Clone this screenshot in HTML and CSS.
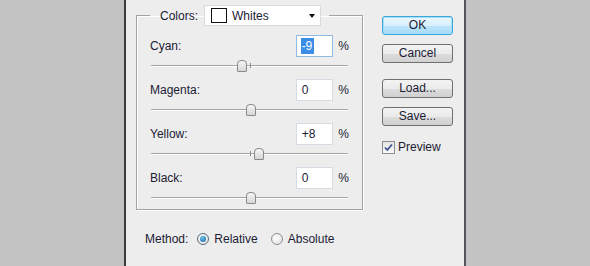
FILE: index.html
```html
<!DOCTYPE html>
<html lang="en">
<head>
    <meta charset="UTF-8">
    <title>Selective Color</title>
    <link rel="stylesheet" href="styles.css">
</head>
<body>
    <div class="dialog">
        <div class="main">
            <fieldset class="group">
                <legend class="group-head">
                    <span class="group-label">Colors:</span>
                    <div class="select">
                        <span class="swatch"></span>
                        <span class="select-text">Whites</span>
                        <span class="select-arrow"></span>
                    </div>
                </legend>

                <div class="adj">
                    <div class="adj-top">
                        <span class="adj-label">Cyan:</span>
                        <div class="num focused"><span class="sel">-9</span></div>
                        <span class="pct">%</span>
                    </div>
                    <div class="slider"><span class="tick"></span><span class="thumb" style="left: 86px"></span></div>
                </div>
                <div class="adj">
                    <div class="adj-top">
                        <span class="adj-label">Magenta:</span>
                        <div class="num">0</div>
                        <span class="pct">%</span>
                    </div>
                    <div class="slider"><span class="tick"></span><span class="thumb" style="left: 95px"></span></div>
                </div>
                <div class="adj">
                    <div class="adj-top">
                        <span class="adj-label">Yellow:</span>
                        <div class="num">+8</div>
                        <span class="pct">%</span>
                    </div>
                    <div class="slider"><span class="tick"></span><span class="thumb" style="left: 103px"></span></div>
                </div>
                <div class="adj">
                    <div class="adj-top">
                        <span class="adj-label">Black:</span>
                        <div class="num">0</div>
                        <span class="pct">%</span>
                    </div>
                    <div class="slider"><span class="tick"></span><span class="thumb" style="left: 95px"></span></div>
                </div>
            </fieldset>

            <div class="method">
                <span class="method-label">Method:</span>
                <span class="radio checked"></span>
                <span class="radio-text">Relative</span>
                <span class="radio"></span>
                <span class="radio-text">Absolute</span>
            </div>
        </div>

        <div class="side">
            <div class="btn btn-default">OK</div>
            <div class="btn">Cancel</div>
            <div class="btn btn-load">Load...</div>
            <div class="btn">Save...</div>
            <div class="preview">
                <span class="check">
                    <svg width="11" height="11" viewBox="0 0 11 11"><path d="M2 5.5 L4.3 8 L9 2.5" fill="none" stroke="#3d4f8f" stroke-width="1.8"/></svg>
                </span>
                <span>Preview</span>
            </div>
        </div>
    </div>
</body>
</html>
```

FILE: styles.css
```css
body, html {
    margin: 0;
    height: 100%;
    overflow: hidden;
    background: #c3c3c3;
    font-family: 'Liberation Sans', Arial, sans-serif;
    font-size: 12px;
    color: #1b1b33;
}

.dialog {
    margin-left: 124px;
    width: 342px;
    height: 266px;
    box-sizing: border-box;
    padding-top: 5px;
    background: #ededed;
    border-left: 2px solid #3a3a3d;
    border-right: 2px solid #56525c;
    display: flex;
}

.main {
    padding-left: 10px;
    width: 227px;
}

.group {
    margin: 0;
    min-width: 0;
    width: 227px;
    box-sizing: border-box;
    padding: 9px 13px 6px 13px;
    border: 1px solid #a3a3a3;
    box-shadow: inset 1px 1px 0 #fff, 1px 1px 0 #fff;
}

.group-head {
    display: flex;
    align-items: center;
    padding: 0 8px 0 10px;
}

.group-label {
    margin-right: 6px;
}

.select {
    width: 117px;
    height: 21px;
    box-sizing: border-box;
    background: #fff;
    border: 1px solid #dadada;
    display: flex;
    align-items: center;
}

.swatch {
    width: 14px;
    height: 13px;
    margin-left: 6px;
    border: 1px solid #111;
    background: #fff;
}

.select-text {
    margin-left: 5px;
    flex: 1;
}

.select-arrow {
    width: 0;
    height: 0;
    margin-right: 5px;
    border-left: 3.5px solid transparent;
    border-right: 3.5px solid transparent;
    border-top: 4px solid #111;
}

.adj + .adj {
    margin-top: 8px;
}

.adj-top {
    display: flex;
    align-items: center;
    height: 22px;
}

.adj-label {
    width: 147px;
}

.num {
    width: 38px;
    height: 22px;
    box-sizing: border-box;
    background: #fff;
    border: 1px solid #d4dbe3;
    padding-left: 5px;
    line-height: 20px;
}

.num.focused {
    border-color: #8fbbe6;
    padding: 2px 0 2px 4px;
    line-height: 16px;
}

.sel {
    display: inline-block;
    background: #3b8de6;
    color: #fff;
    padding: 0 2px 0 1px;
}

.pct {
    margin-left: 5px;
}

.slider {
    position: relative;
    height: 14px;
    margin-left: 1px;
    width: 197px;
}

.slider::before {
    content: "";
    position: absolute;
    left: 0;
    right: 0;
    top: 8px;
    height: 1px;
    background: #a6a6a6;
    box-shadow: 0 1px 0 #fff;
}

.tick {
    position: absolute;
    left: 99px;
    top: 6px;
    width: 1px;
    height: 5px;
    background: #8d8d8d;
}

.thumb {
    position: absolute;
    top: 3px;
    width: 8px;
    height: 10px;
    border: 1px solid #8a8a8a;
    border-radius: 4px 4px 1px 1px;
    background: linear-gradient(#f6f6f6, #d6d6d6);
}

.method {
    margin-top: 21px;
    padding-left: 9px;
    display: flex;
    align-items: center;
    height: 16px;
}

.method-label {
    margin-right: 9px;
}

.radio {
    width: 10px;
    height: 10px;
    border-radius: 50%;
    border: 1px solid #8e8f8f;
    background: radial-gradient(circle at 40% 40%, #ffffff, #dcdcdc);
    margin-right: 5px;
    position: relative;
}

.radio.checked {
    border-color: #5a6a7a;
}

.radio.checked::after {
    content: "";
    position: absolute;
    left: 2px;
    top: 2px;
    width: 6px;
    height: 6px;
    border-radius: 50%;
    background: radial-gradient(circle at 40% 35%, #6cc6f0, #0f5a94);
}

.radio-text + .radio {
    margin-left: 13px;
}

.side {
    margin-left: 19px;
    padding-top: 11px;
    display: flex;
    flex-direction: column;
    width: 71px;
}

.btn {
    height: 19px;
    box-sizing: border-box;
    border: 1px solid #707070;
    border-radius: 3px;
    background: linear-gradient(#f3f3f3 0%, #ebebeb 50%, #dddddd 51%, #d0d0d0 100%);
    text-align: center;
    line-height: 17px;
    margin-bottom: 9px;
}

.btn-default {
    border-color: #3aa6dd;
    box-shadow: inset 0 0 0 1px #a6e0f8;
    background: linear-gradient(#eaf6fd 0%, #d9f0fc 50%, #bee6fd 51%, #a7d9f5 100%);
}

.btn-load {
    margin-top: 7px;
}

.preview {
    margin-top: 5px;
    display: flex;
    align-items: center;
    height: 14px;
}

.check {
    width: 11px;
    height: 11px;
    border: 1px solid #8e8f8f;
    background: linear-gradient(#e4e4e4, #fafafa);
    margin-right: 3px;
    display: flex;
}
```
